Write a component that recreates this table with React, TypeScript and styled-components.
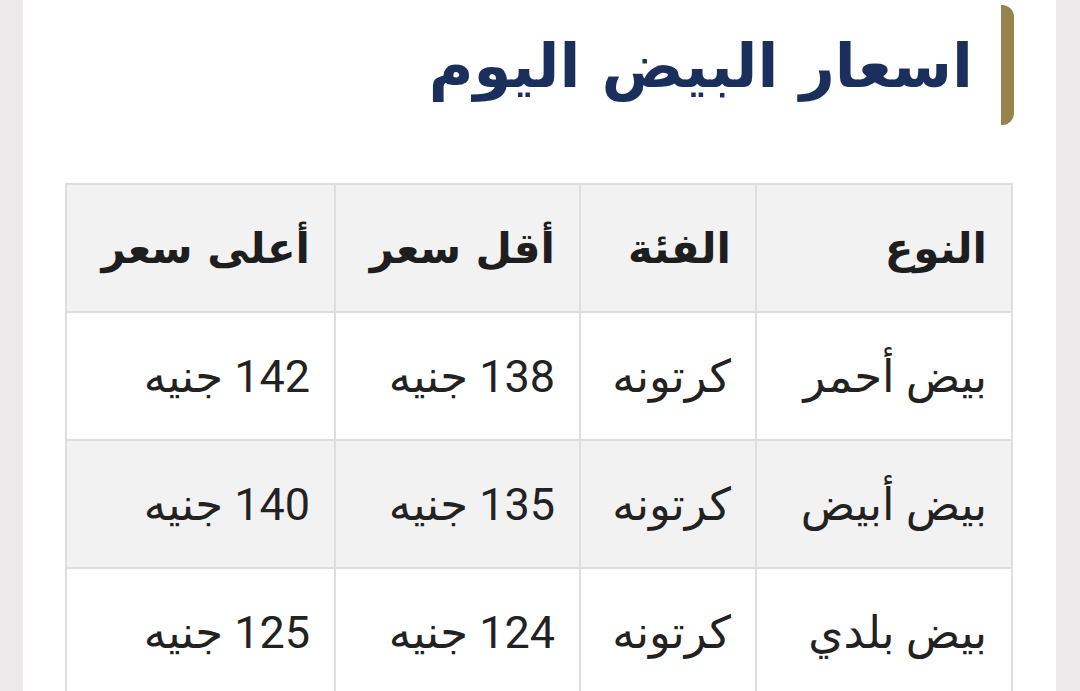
import React from 'react'
import styled, { createGlobalStyle } from 'styled-components'

const GlobalStyle = createGlobalStyle({
  'html, body': {
    margin: 0,
    padding: 0,
    background: '#ebe9e9',
  },
  body: {
    fontFamily: 'Roboto, "DejaVu Sans", sans-serif',
    overflow: 'hidden',
  },
})

const Page = styled.div({
  padding: '0 24px 0 23px',
  height: '691px',
  overflow: 'hidden',
})

const Card = styled.article({
  background: '#ffffff',
  direction: 'rtl',
  padding: '5px 43px 0 44px',
  minHeight: '100%',
  boxSizing: 'border-box',
})

const Title = styled.h2({
  margin: 0,
  height: '120px',
  display: 'flex',
  alignItems: 'center',
  paddingRight: '28px',
  borderRight: '13px solid #98824e',
  borderRadius: '0 12px 12px 0',
  marginRight: '-1px',
  color: '#1b2f5c',
  fontFamily: '"DejaVu Sans", sans-serif',
  fontWeight: 700,
  fontSize: '61px',
  lineHeight: 1,
})

const Table = styled.table({
  marginTop: '58px',
  width: '100%',
  borderCollapse: 'collapse',
  tableLayout: 'fixed',
  border: '2px solid #dedede',
})

const Row = styled.tr<{ $shaded?: boolean }>(({ $shaded }) => ({
  background: $shaded ? '#f2f2f2' : '#ffffff',
  height: '128px',
}))

const HeadCell = styled.th({
  border: '2px solid #dedede',
  padding: '0 24px',
  textAlign: 'right',
  fontWeight: 700,
  fontSize: '42px',
  color: '#1e1e1e',
  fontFamily: '"DejaVu Sans", sans-serif',
  whiteSpace: 'nowrap',
})

const Cell = styled.td({
  border: '2px solid #dedede',
  padding: '0 24px',
  textAlign: 'right',
  fontSize: '45px',
  color: '#222222',
  whiteSpace: 'nowrap',
})

const rows = [
  ['بيض أحمر', 'كرتونه', '138 جنيه', '142 جنيه'],
  ['بيض أبيض', 'كرتونه', '135 جنيه', '140 جنيه'],
  ['بيض بلدي', 'كرتونه', '124 جنيه', '125 جنيه'],
]

export default function App() {
  return (
    <>
      <GlobalStyle />
      <Page>
        <Card>
          <Title>اسعار البيض اليوم</Title>
          <Table>
            <colgroup>
              <col style={{ width: '256px' }} />
              <col style={{ width: '176px' }} />
              <col style={{ width: '245px' }} />
              <col style={{ width: '269px' }} />
            </colgroup>
            <thead>
              <Row $shaded>
                <HeadCell>النوع</HeadCell>
                <HeadCell>الفئة</HeadCell>
                <HeadCell>أقل سعر</HeadCell>
                <HeadCell>أعلى سعر</HeadCell>
              </Row>
            </thead>
            <tbody>
              {rows.map((r, i) => (
                <Row key={i} $shaded={i % 2 === 1}>
                  {r.map((c, j) => (
                    <Cell key={j}>{c}</Cell>
                  ))}
                </Row>
              ))}
            </tbody>
          </Table>
        </Card>
      </Page>
    </>
  )
}
